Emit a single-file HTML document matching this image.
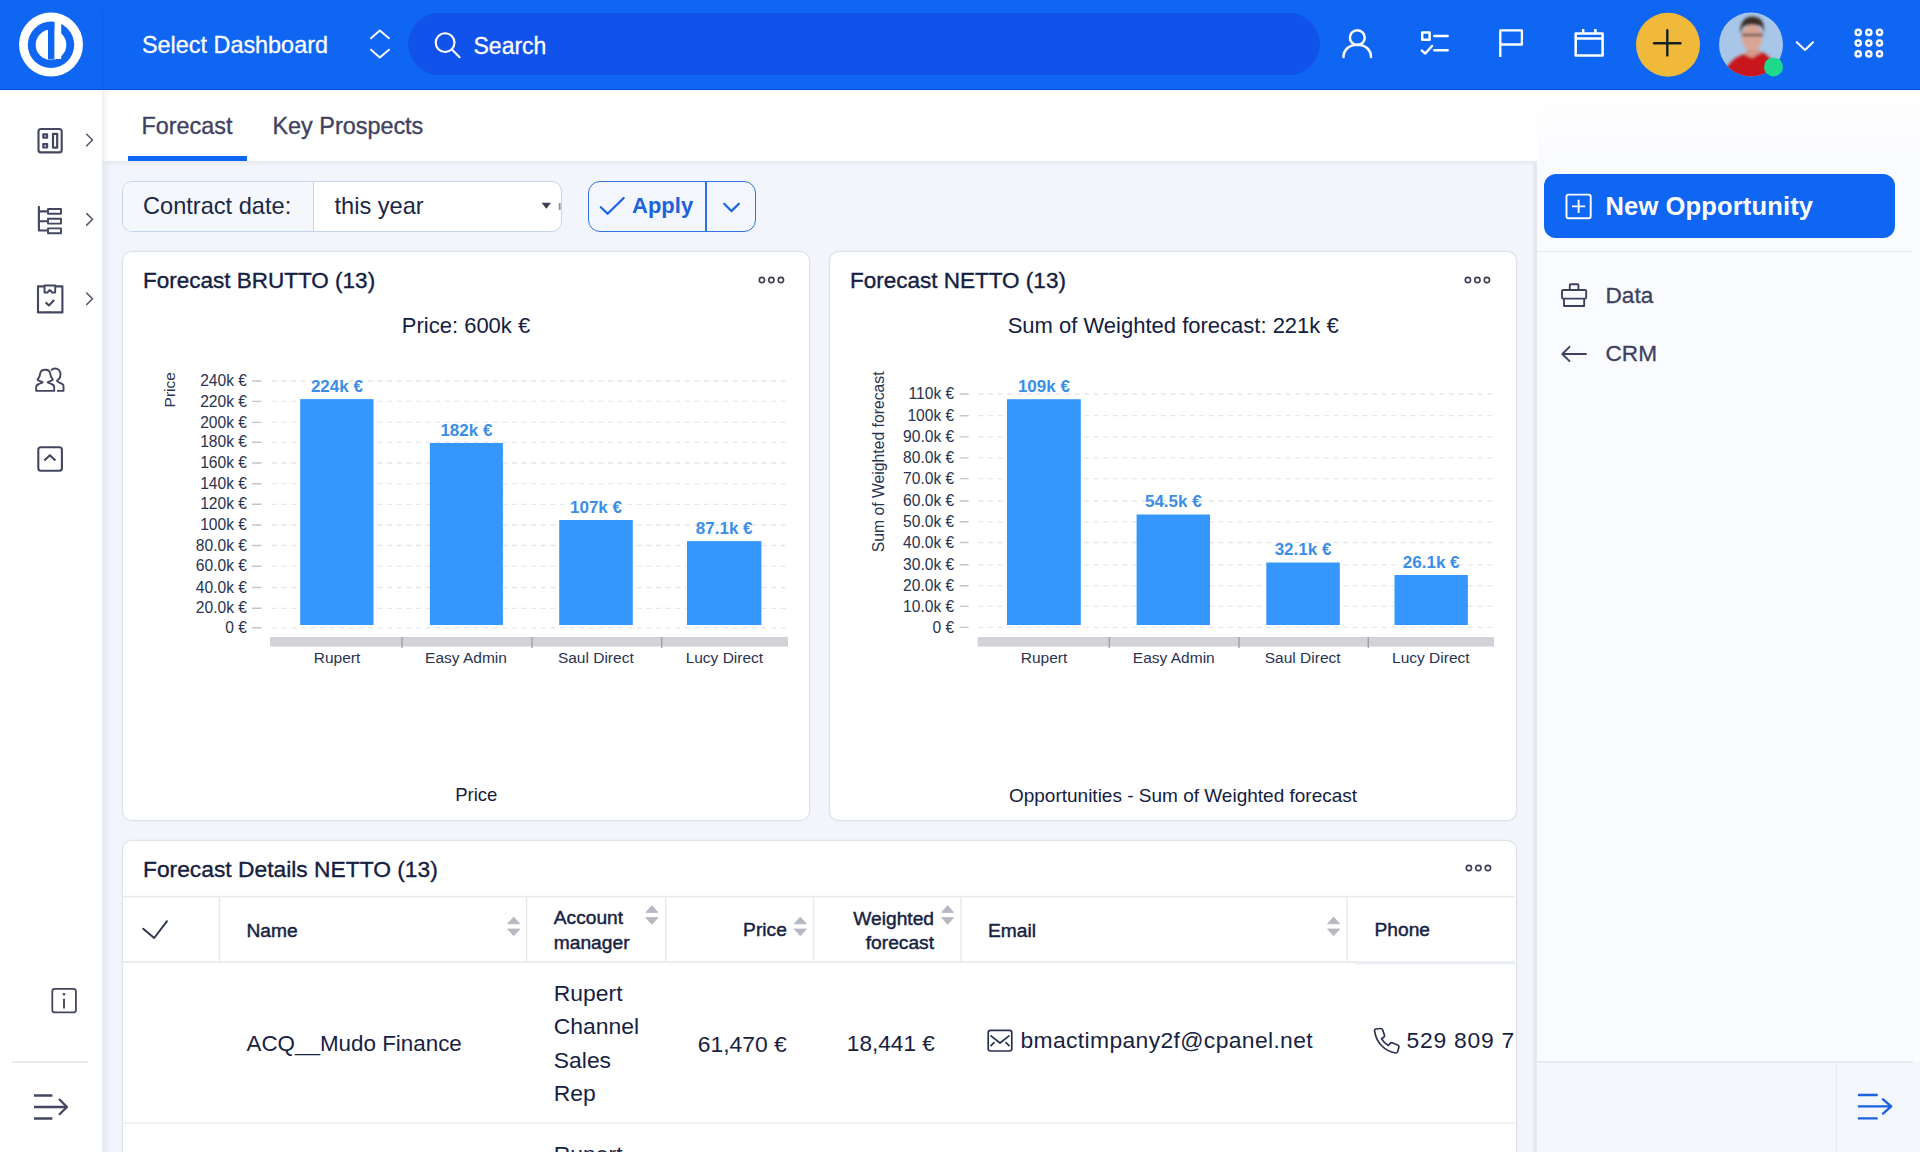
<!DOCTYPE html>
<html><head><meta charset="utf-8">
<style>
*{box-sizing:border-box;margin:0;padding:0}
html,body{width:1920px;height:1152px;overflow:hidden;font-family:"Liberation Sans",sans-serif;color:#1b2440;background:#f2f5fc}
.abs{position:absolute}
.t{position:absolute;white-space:nowrap;line-height:1}
#hdr{position:absolute;left:0;top:0;width:1920px;height:90px;background:#0e66f2;border-bottom:1.5px solid #0852d6}
#search{position:absolute;left:408px;top:13px;width:912px;height:62px;border-radius:31px;background:#1152ea}
#lsb{position:absolute;left:0;top:90px;width:102px;height:1062px;background:#fff}
#lsbsh{position:absolute;left:102px;top:90px;width:8px;height:1062px;background:linear-gradient(90deg,rgba(30,40,70,.07),rgba(30,40,70,0))}
#tabs{position:absolute;left:102px;top:90px;width:1435px;height:72px;background:#fff}
#tabsh{position:absolute;left:102px;top:161px;width:1435px;height:5px;background:linear-gradient(180deg,#e4e7ec,rgba(242,245,252,0))}
#rsb{position:absolute;left:1537px;top:90px;width:383px;height:1062px;background:linear-gradient(180deg,#fff 0px,#fafbfe 70px)}
#rsbsh{position:absolute;left:1532px;top:162px;width:5px;height:990px;background:linear-gradient(90deg,rgba(226,230,238,0),#e2e6ee 60%,#e6e9f0)}
.card{position:absolute;background:#fff;border:1.7px solid #dfe3e8;border-radius:10px;box-shadow:0 0 1.5px rgba(40,50,70,.10)}
.ic{position:absolute;overflow:visible}
</style></head><body>
<div id="hdr"></div>
<div class="abs" style="left:101.5px;top:10px;width:1.2px;height:79px;background:#0a5de6"></div>
<!-- logo -->
<svg class="ic" style="left:0;top:0" width="102" height="90" viewBox="0 0 102 90">
<circle cx="51" cy="44.6" r="32" fill="#fff"/>
<circle cx="51" cy="44.8" r="23.2" fill="#0e66f2"/>
<circle cx="51" cy="44.8" r="15.3" fill="#fff"/>
<rect x="48" y="22" width="6.6" height="37.5" fill="#0e66f2"/>
<rect x="54.6" y="14" width="6.6" height="45" fill="#fff"/>
</svg>
<div class="t" style="left:142px;top:34px;font-size:23.4px;color:#fff;-webkit-text-stroke:0.3px currentColor">Select Dashboard</div>
<svg class="ic" style="left:0;top:0" width="400" height="90"><path d="M371 38.2 L379.8 30.5 L389 38.2 M371 49.7 L379.8 57.4 L389 49.7" stroke="#fff" stroke-width="2" fill="none" stroke-linecap="round" stroke-linejoin="round"/></svg>
<div id="search"></div>
<svg class="ic" style="left:0;top:0" width="470" height="90"><circle cx="445.1" cy="42.6" r="9.4" stroke="#fff" stroke-width="2.1" fill="none"/><path d="M452.4 50 L459.6 57.2" stroke="#fff" stroke-width="2.1" stroke-linecap="round"/></svg>
<div class="t" style="left:473.5px;top:34.5px;font-size:23px;color:#fff;-webkit-text-stroke:0.3px currentColor">Search</div>

<!-- header right icons -->
<svg class="ic" style="left:0;top:0" width="1920" height="90" fill="none" stroke="#fff" stroke-width="2.5" stroke-linecap="round" stroke-linejoin="round">
<circle cx="1357.3" cy="37.7" r="7.4"/>
<path d="M1343.5 57 C1343.5 50 1349 44.8 1357.3 44.8 C1365.6 44.8 1371 50 1371 57"/>
<rect x="1422.2" y="32.5" width="7.4" height="7.2" stroke-linecap="butt"/>
<path d="M1434.3 35.9 H1447.6 M1434.3 50.2 H1447.6"/>
<path d="M1421.8 50.6 L1425.3 53.5 L1432 46" />
<path d="M1500.3 57 V30.4 H1521.9 V44.5 H1500.3" stroke-linecap="butt" stroke-width="2.3"/>
<rect x="1575.7" y="33.4" width="26.9" height="22" stroke-linecap="butt"/>
<path d="M1575.7 38.5 H1602.6 M1583.2 29 V33.4 M1595.4 29 V33.4" stroke-linecap="butt"/>
<path d="M1796.8 42.2 L1805 50 L1813 42.2" stroke-width="2.1"/>
</svg>
<svg class="ic" style="left:0;top:0" width="1920" height="90">
<circle cx="1668" cy="44.7" r="32" fill="#f1b93a"/>
<path d="M1654 43.2 H1680.5 M1667.3 30.3 V55.4" stroke="#14201f" stroke-width="2.4" stroke-linecap="round"/>
<defs><clipPath id="avc"><circle cx="1751" cy="44.5" r="32"/></clipPath>
<filter id="blr"><feGaussianBlur stdDeviation="1.6"/></filter></defs>
<g clip-path="url(#avc)">
<rect x="1715" y="10" width="72" height="70" fill="#a8c6e8"/>
<g filter="url(#blr)">
<path d="M1722 82 C1723 68 1732 58 1744 54 L1752 57 L1762 52 C1770 56 1776 64 1780 82 Z" fill="#c7141c"/>
<path d="M1744 54 L1748 49 H1757 L1762 52 L1752 58 Z" fill="#d49a88"/>
<ellipse cx="1752" cy="37.5" rx="10.5" ry="13" fill="#d9a696"/>
<path d="M1740.5 34 C1739 21 1746 16.5 1752 16.5 C1760 16.5 1765 21 1764 33 L1762 27 C1757 24 1747 24 1743 27 Z" fill="#3a2d28"/>
<path d="M1742 35 H1763" stroke="#4d3b36" stroke-width="2.2"/>
</g>
</g>
<circle cx="1773.5" cy="66.9" r="9.5" fill="#1fd98b"/>
<g fill="none" stroke="#fff" stroke-width="2.4">
<circle cx="1858.2" cy="32.4" r="2.6"/><circle cx="1868.8" cy="32.4" r="2.6"/><circle cx="1879.5" cy="32.4" r="2.6"/>
<circle cx="1858.2" cy="43.1" r="2.6"/><circle cx="1868.8" cy="43.1" r="2.6"/><circle cx="1879.5" cy="43.1" r="2.6"/>
<circle cx="1858.2" cy="53.9" r="2.6"/><circle cx="1868.8" cy="53.9" r="2.6"/><circle cx="1879.5" cy="53.9" r="2.6"/>
</g>
</svg>

<div id="lsb"></div>
<div id="tabs"></div>
<div id="lsbsh"></div>
<div id="rsb"></div>
<div id="tabsh"></div>
<div id="rsbsh"></div>

<!-- left sidebar icons -->
<svg class="ic" style="left:0;top:0" width="102" height="1152" fill="none" stroke="#43465f" stroke-width="2.1" stroke-linejoin="round">
<rect x="38.5" y="129" width="23.2" height="23.4" rx="2.5"/>
<rect x="43.3" y="134.3" width="3.8" height="3.4" stroke-width="2.2"/>
<rect x="43.3" y="144.1" width="3.8" height="3.4" stroke-width="2.2"/>
<rect x="53" y="133.8" width="4.2" height="13.8" stroke-width="2.2"/>
<path d="M38.9 206 V230.5 H47.4 M38.9 211.4 H47.4 M38.9 221.2 H47.4"/>
<rect x="48" y="209" width="13" height="4.8" stroke-width="1.9"/>
<rect x="48" y="218.8" width="13" height="4.8" stroke-width="1.9"/>
<rect x="48" y="228.4" width="13" height="4.8" stroke-width="1.9"/>
<path d="M44.2 286.4 H38 V312.4 H62.4 V286.4 H55.4"/>
<path d="M44.5 285.5 V292.5 H47.5 L49.8 290 L52.3 292.5 H55.2 V285.5 Z" stroke-width="1.9"/>
<path d="M45.6 302.2 L48.9 305.4 L54.2 300"/>
<path stroke-width="1.9" d="M36.2 390.9 V387 C36.2 385.5 37.5 384.5 39 384 L42.7 382.3 C41.5 381.5 38.3 381 37.6 379.7 C39.5 377.5 40 375.5 40.2 373.4 C40.6 371 42.5 369.8 45.2 369.8 C47.9 369.8 49.8 371 50.2 373.4 C50.4 375.5 50.9 377.5 52.8 379.7 C52.1 381 48.9 381.5 47.7 382.3 L51.4 384 C52.9 384.5 54.2 385.5 54.2 387 V390.9 Z"/>
<path stroke-width="1.9" d="M51.6 369.8 C52.5 368.8 53.8 368.5 55 368.5 C58.3 368.5 60.5 371 60.5 374.5 C60.5 377.2 59.2 379.2 56.9 380.7 C57.5 382 60 383 62 383.8 C63 384.3 63.5 385 63.5 386 V390.9 H57.8" stroke-linecap="round"/>
<rect x="38.3" y="447.3" width="23.6" height="23.4" rx="2.5"/>
<path d="M44.3 460.6 L49.9 455.2 L55.4 460.6"/>
<rect x="52.3" y="988.8" width="23.6" height="23.6" rx="2.5" stroke-width="1.8"/>
<path d="M64 998.8 V1008.5" stroke-width="1.9"/><circle cx="64" cy="994.3" r="1.3" fill="#3f425e" stroke="none"/>
<path d="M34 1095.5 H52.4 M34 1118.5 H52.4 M34 1107 H66.5 M59 1099 L67 1107 L59 1114.8" stroke-width="2.3"/>
</svg>
<svg class="ic" style="left:0;top:0" width="102" height="400" fill="none" stroke="#55586e" stroke-width="1.6" stroke-linecap="round" stroke-linejoin="round">
<path d="M86.7 134.3 L92.5 140 L86.7 145.8"/>
<path d="M86.7 213.6 L92.5 219.3 L86.7 225.1"/>
<path d="M86.7 293 L92.5 298.7 L86.7 304.5"/>
</svg>
<div class="abs" style="left:12px;top:1061px;width:76px;height:1.5px;background:#e9eaef"></div>

<!-- tabs -->
<div class="t" style="left:141.5px;top:115.2px;font-size:23.4px;color:#3f4361;-webkit-text-stroke:0.35px currentColor">Forecast</div>
<div class="t" style="left:272.5px;top:115.2px;font-size:23.4px;color:#3f4361;-webkit-text-stroke:0.35px currentColor">Key Prospects</div>
<div class="abs" style="left:128px;top:156px;width:119px;height:5px;background:#0e66f2"></div>

<!-- filter bar -->
<div class="abs" style="left:122px;top:180.5px;width:439.5px;height:51px;border:1.5px solid #c8d5e8;border-radius:10px;background:#fff;overflow:hidden">
<div class="abs" style="left:0;top:0;width:191px;height:49px;background:#f4f7fc;border-right:1.5px solid #c8d5e8"></div>
</div>
<div class="t" style="left:143px;top:195px;font-size:23.6px;color:#1b2746">Contract date:</div>
<div class="t" style="left:334.5px;top:195px;font-size:23.6px;color:#1b2746">this year</div>
<svg class="ic" style="left:0;top:0" width="600" height="240"><path d="M541.6 202.8 H551 L546.3 208.8 Z" fill="#3b3f55"/><rect x="558.8" y="203" width="1.8" height="7" fill="#8a8e9a"/></svg>
<div class="abs" style="left:587.5px;top:180.5px;width:168.5px;height:51px;border:1.8px solid #2f72e2;border-radius:12px;background:#f3f7fd"></div>
<div class="abs" style="left:705px;top:181px;width:1.8px;height:50px;background:#2f72e2"></div>
<svg class="ic" style="left:0;top:0" width="800" height="240" fill="none" stroke="#1a63dc" stroke-width="2.2" stroke-linecap="round" stroke-linejoin="round"><path d="M600.8 207.2 L607.6 213.8 L623.7 198"/><path d="M724.2 203.8 L731.4 211.1 L738.9 203.8"/></svg>
<div class="t" style="left:632px;top:195px;font-size:22px;font-weight:bold;color:#1a63dc">Apply</div>

<!-- CHARTS -->
<div class="card" style="left:122px;top:251px;width:688px;height:570px"></div>
<div class="t" style="left:143.0px;top:269.7px;font-size:22.5px;color:#14203f;-webkit-text-stroke:0.35px currentColor;">Forecast BRUTTO (13)</div>
<svg class="ic" style="left:751.5px;top:270px" width="40" height="20"><g fill="none" stroke="#3c3f56" stroke-width="1.6"><circle cx="9.9" cy="10" r="2.65"/><circle cx="19.4" cy="10" r="2.65"/><circle cx="28.9" cy="10" r="2.65"/></g></svg>
<div class="t" style="left:-34.0px;width:1000px;text-align:center;top:315.4px;font-size:22px;color:#14203f;">Price: 600k €</div>
<svg class="ic" style="left:0;top:0" width="1920" height="900">
<path d="M272 381.0 H786 M272 401.4 H786 M272 422.4 H786 M272 442.3 H786 M272 463.0 H786 M272 483.7 H786 M272 504.3 H786 M272 525.0 H786 M272 545.5 H786 M272 566.3 H786 M272 587.5 H786 M272 608.3 H786 M272 627.8 H786" stroke="#e7e8eb" stroke-width="1.3" stroke-dasharray="5 4.6" fill="none"/>
<path d="M252 381.0 H261.5 M252 401.4 H261.5 M252 422.4 H261.5 M252 442.3 H261.5 M252 463.0 H261.5 M252 483.7 H261.5 M252 504.3 H261.5 M252 525.0 H261.5 M252 545.5 H261.5 M252 566.3 H261.5 M252 587.5 H261.5 M252 608.3 H261.5 M252 627.8 H261.5" stroke="#c3c5cb" stroke-width="1.4" fill="none"/>
<rect x="270" y="637" width="518" height="9.6" fill="#d2d3d8"/>
<rect x="401.3" y="637" width="1.4" height="11" fill="#a0a2a8"/>
<rect x="531.3" y="637" width="1.4" height="11" fill="#a0a2a8"/>
<rect x="661.0" y="637" width="1.4" height="11" fill="#a0a2a8"/>
<rect x="300.2" y="399.1" width="73.30000000000001" height="225.89999999999998" fill="#3597fe"/>
<rect x="429.9" y="443" width="73.0" height="182" fill="#3597fe"/>
<rect x="559.2" y="520" width="73.59999999999991" height="105" fill="#3597fe"/>
<rect x="687" y="541.1" width="74.39999999999998" height="83.89999999999998" fill="#3597fe"/>
</svg>
<div class="t" style="right:1673.0px;top:373.1px;font-size:15.6px;color:#2a3350;">240k €</div>
<div class="t" style="right:1673.0px;top:393.5px;font-size:15.6px;color:#2a3350;">220k €</div>
<div class="t" style="right:1673.0px;top:414.5px;font-size:15.6px;color:#2a3350;">200k €</div>
<div class="t" style="right:1673.0px;top:434.4px;font-size:15.6px;color:#2a3350;">180k €</div>
<div class="t" style="right:1673.0px;top:455.1px;font-size:15.6px;color:#2a3350;">160k €</div>
<div class="t" style="right:1673.0px;top:475.8px;font-size:15.6px;color:#2a3350;">140k €</div>
<div class="t" style="right:1673.0px;top:496.4px;font-size:15.6px;color:#2a3350;">120k €</div>
<div class="t" style="right:1673.0px;top:517.1px;font-size:15.6px;color:#2a3350;">100k €</div>
<div class="t" style="right:1673.0px;top:537.6px;font-size:15.6px;color:#2a3350;">80.0k €</div>
<div class="t" style="right:1673.0px;top:558.4px;font-size:15.6px;color:#2a3350;">60.0k €</div>
<div class="t" style="right:1673.0px;top:579.6px;font-size:15.6px;color:#2a3350;">40.0k €</div>
<div class="t" style="right:1673.0px;top:600.4px;font-size:15.6px;color:#2a3350;">20.0k €</div>
<div class="t" style="right:1673.0px;top:619.9px;font-size:15.6px;color:#2a3350;">0 €</div>
<div class="t" style="left:-163.1px;width:1000px;text-align:center;top:377.9px;font-size:17px;color:#3a8ee8;font-weight:bold;">224k €</div>
<div class="t" style="left:-33.6px;width:1000px;text-align:center;top:421.8px;font-size:17px;color:#3a8ee8;font-weight:bold;">182k €</div>
<div class="t" style="left:96.0px;width:1000px;text-align:center;top:498.8px;font-size:17px;color:#3a8ee8;font-weight:bold;">107k €</div>
<div class="t" style="left:224.2px;width:1000px;text-align:center;top:519.9px;font-size:17px;color:#3a8ee8;font-weight:bold;">87.1k €</div>
<div class="t" style="left:-163.0px;width:1000px;text-align:center;top:649.6px;font-size:15.5px;color:#2a3350;">Rupert</div>
<div class="t" style="left:-34.0px;width:1000px;text-align:center;top:649.6px;font-size:15.5px;color:#2a3350;">Easy Admin</div>
<div class="t" style="left:95.8px;width:1000px;text-align:center;top:649.6px;font-size:15.5px;color:#2a3350;">Saul Direct</div>
<div class="t" style="left:224.4px;width:1000px;text-align:center;top:649.6px;font-size:15.5px;color:#2a3350;">Lucy Direct</div>
<div class="t" style="left:-130px;top:382.2px;width:600px;height:15.5px;text-align:center;font-size:15.5px;color:#2a3350;transform:rotate(-90deg);transform-origin:300px 7.75px">Price</div>
<div class="t" style="left:-23.7px;width:1000px;text-align:center;top:786.0px;font-size:18.5px;color:#14203f;">Price</div>
<div class="card" style="left:829px;top:251px;width:688px;height:570px"></div>
<div class="t" style="left:850.0px;top:269.7px;font-size:22.5px;color:#14203f;-webkit-text-stroke:0.35px currentColor;">Forecast NETTO (13)</div>
<svg class="ic" style="left:1458px;top:270px" width="40" height="20"><g fill="none" stroke="#3c3f56" stroke-width="1.6"><circle cx="9.9" cy="10" r="2.65"/><circle cx="19.4" cy="10" r="2.65"/><circle cx="28.9" cy="10" r="2.65"/></g></svg>
<div class="t" style="left:673.2px;width:1000px;text-align:center;top:315.4px;font-size:22px;color:#14203f;">Sum of Weighted forecast: 221k €</div>
<svg class="ic" style="left:0;top:0" width="1920" height="900">
<path d="M978.4 394.0 H1492 M978.4 415.7 H1492 M978.4 436.9 H1492 M978.4 457.9 H1492 M978.4 478.6 H1492 M978.4 501.0 H1492 M978.4 521.8 H1492 M978.4 542.5 H1492 M978.4 564.8 H1492 M978.4 585.7 H1492 M978.4 606.4 H1492 M978.4 627.4 H1492" stroke="#e7e8eb" stroke-width="1.3" stroke-dasharray="5 4.6" fill="none"/>
<path d="M959.7 394.0 H968.7 M959.7 415.7 H968.7 M959.7 436.9 H968.7 M959.7 457.9 H968.7 M959.7 478.6 H968.7 M959.7 501.0 H968.7 M959.7 521.8 H968.7 M959.7 542.5 H968.7 M959.7 564.8 H968.7 M959.7 585.7 H968.7 M959.7 606.4 H968.7 M959.7 627.4 H968.7" stroke="#c3c5cb" stroke-width="1.4" fill="none"/>
<rect x="977.7" y="637" width="516.3" height="9.6" fill="#d2d3d8"/>
<rect x="1108.6" y="637" width="1.4" height="11" fill="#a0a2a8"/>
<rect x="1238.3" y="637" width="1.4" height="11" fill="#a0a2a8"/>
<rect x="1367.6" y="637" width="1.4" height="11" fill="#a0a2a8"/>
<rect x="1007" y="399.2" width="73.79999999999995" height="225.8" fill="#3597fe"/>
<rect x="1136.6" y="514.5" width="73.40000000000009" height="110.5" fill="#3597fe"/>
<rect x="1266.3" y="562.5" width="73.5" height="62.5" fill="#3597fe"/>
<rect x="1394.5" y="575" width="73.40000000000009" height="50" fill="#3597fe"/>
</svg>
<div class="t" style="right:965.8px;top:386.1px;font-size:15.6px;color:#2a3350;">110k €</div>
<div class="t" style="right:965.8px;top:407.8px;font-size:15.6px;color:#2a3350;">100k €</div>
<div class="t" style="right:965.8px;top:429.0px;font-size:15.6px;color:#2a3350;">90.0k €</div>
<div class="t" style="right:965.8px;top:450.0px;font-size:15.6px;color:#2a3350;">80.0k €</div>
<div class="t" style="right:965.8px;top:470.7px;font-size:15.6px;color:#2a3350;">70.0k €</div>
<div class="t" style="right:965.8px;top:493.1px;font-size:15.6px;color:#2a3350;">60.0k €</div>
<div class="t" style="right:965.8px;top:513.9px;font-size:15.6px;color:#2a3350;">50.0k €</div>
<div class="t" style="right:965.8px;top:534.6px;font-size:15.6px;color:#2a3350;">40.0k €</div>
<div class="t" style="right:965.8px;top:556.9px;font-size:15.6px;color:#2a3350;">30.0k €</div>
<div class="t" style="right:965.8px;top:577.8px;font-size:15.6px;color:#2a3350;">20.0k €</div>
<div class="t" style="right:965.8px;top:598.5px;font-size:15.6px;color:#2a3350;">10.0k €</div>
<div class="t" style="right:965.8px;top:619.5px;font-size:15.6px;color:#2a3350;">0 €</div>
<div class="t" style="left:543.9px;width:1000px;text-align:center;top:378.0px;font-size:17px;color:#3a8ee8;font-weight:bold;">109k €</div>
<div class="t" style="left:673.3px;width:1000px;text-align:center;top:493.3px;font-size:17px;color:#3a8ee8;font-weight:bold;">54.5k €</div>
<div class="t" style="left:803.0px;width:1000px;text-align:center;top:541.3px;font-size:17px;color:#3a8ee8;font-weight:bold;">32.1k €</div>
<div class="t" style="left:931.2px;width:1000px;text-align:center;top:553.8px;font-size:17px;color:#3a8ee8;font-weight:bold;">26.1k €</div>
<div class="t" style="left:544.0px;width:1000px;text-align:center;top:649.6px;font-size:15.5px;color:#2a3350;">Rupert</div>
<div class="t" style="left:673.8px;width:1000px;text-align:center;top:649.6px;font-size:15.5px;color:#2a3350;">Easy Admin</div>
<div class="t" style="left:802.7px;width:1000px;text-align:center;top:649.6px;font-size:15.5px;color:#2a3350;">Saul Direct</div>
<div class="t" style="left:930.8px;width:1000px;text-align:center;top:649.6px;font-size:15.5px;color:#2a3350;">Lucy Direct</div>
<div class="t" style="left:578.8px;top:454.4px;width:600px;height:15.75px;text-align:center;font-size:15.75px;color:#2a3350;transform:rotate(-90deg);transform-origin:300px 7.875px">Sum of Weighted forecast</div>
<div class="t" style="left:683.0px;width:1000px;text-align:center;top:785.6px;font-size:19px;color:#14203f;">Opportunities - Sum of Weighted forecast</div>
<!-- /CHARTS -->
<!-- TABLE -->
<div class="card" style="left:122px;top:840px;width:1394.5px;height:400px;overflow:hidden">
</div>
<div class="t" style="left:143.0px;top:858.0px;font-size:22.8px;color:#14203f;-webkit-text-stroke:0.35px currentColor;">Forecast Details NETTO (13)</div>
<svg class="ic" style="left:1459px;top:858px" width="40" height="20"><g fill="none" stroke="#3c3f56" stroke-width="1.6"><circle cx="9.9" cy="10" r="2.65"/><circle cx="19.4" cy="10" r="2.65"/><circle cx="28.9" cy="10" r="2.65"/></g></svg>
<svg class="ic" style="left:0;top:0" width="1920" height="1152">
<g fill="#e7e9ee">
<rect x="123" y="895.8" width="1392" height="1.5"/>
<rect x="123" y="961.2" width="1392" height="1.6"/>
<rect x="1355" y="962.8" width="160" height="1.6" fill="#eceef2"/>
<rect x="123" y="1122.4" width="1392" height="1.5" fill="#eceef2"/>
<rect x="218.8" y="897" width="1.4" height="64.5"/>
<rect x="526.0" y="897" width="1.4" height="64.5"/>
<rect x="665.0999999999999" y="897" width="1.4" height="64.5"/>
<rect x="812.8" y="897" width="1.4" height="64.5"/>
<rect x="960.3" y="897" width="1.4" height="64.5"/>
<rect x="1346.3" y="897" width="1.4" height="64.5"/>
</g>
<path d="M143.2 928.7 L154.2 938 L167 921.2" fill="none" stroke="#2a3350" stroke-width="1.9" stroke-linecap="round" stroke-linejoin="round"/>
<path d="M507.6 923.8 L513.7 917 L519.8000000000001 923.8 Z M507.6 929 L513.7 935.8 L519.8000000000001 929 Z" fill="#b6b9c2" stroke="#b6b9c2" stroke-width="0.8" stroke-linejoin="round"/>
<path d="M645.8 912.4 L651.9 905.6 L658.0 912.4 Z M645.8 917.6 L651.9 924.4 L658.0 917.6 Z" fill="#b6b9c2" stroke="#b6b9c2" stroke-width="0.8" stroke-linejoin="round"/>
<path d="M794.2 923.8 L800.3000000000001 917 L806.4000000000001 923.8 Z M794.2 929 L800.3000000000001 935.8 L806.4000000000001 929 Z" fill="#b6b9c2" stroke="#b6b9c2" stroke-width="0.8" stroke-linejoin="round"/>
<path d="M941.5 912.4 L947.6 905.6 L953.7 912.4 Z M941.5 917.6 L947.6 924.4 L953.7 917.6 Z" fill="#b6b9c2" stroke="#b6b9c2" stroke-width="0.8" stroke-linejoin="round"/>
<path d="M1327.5 923.8 L1333.6 917 L1339.7 923.8 Z M1327.5 929 L1333.6 935.8 L1339.7 929 Z" fill="#b6b9c2" stroke="#b6b9c2" stroke-width="0.8" stroke-linejoin="round"/>
<g fill="none" stroke="#2a3350" stroke-width="1.7" stroke-linecap="round" stroke-linejoin="round">
<rect x="988.2" y="1030.4" width="23.6" height="20.6" rx="2.4"/>
<path d="M991 1035.8 L1000 1043 L1009 1035.8 M991 1045.6 L994 1042.6 M1006 1042.6 L1009 1045.6"/>
<path d="M1374.6 1031.1 C1374.2 1030 1375 1029.2 1376 1029 L1380.4 1028.5 C1381.5 1028.4 1382.3 1028.9 1382.6 1029.8 L1384.5 1035.2 C1384.7 1036 1384.3 1036.8 1383.7 1037.3 L1381.5 1038.7 C1383.3 1042 1385.2 1043.9 1388.4 1045.6 L1390 1043.5 C1390.5 1042.8 1391.4 1042.5 1392.2 1042.8 L1398 1045.2 C1398.8 1045.6 1399.2 1046.4 1398.9 1047.3 L1397.6 1051.8 C1397.3 1052.6 1396.5 1053.1 1395.6 1053 C1384.5 1051 1376.5 1043 1374.6 1031.1 Z"/>
</g>
</svg>
<div class="t" style="left:246.5px;top:920.6px;font-size:19.2px;color:#172242;font-weight:normal;-webkit-text-stroke:0.45px currentColor;">Name</div>
<div class="t" style="left:553.8px;top:908.3px;font-size:19.2px;color:#172242;font-weight:normal;-webkit-text-stroke:0.45px currentColor;">Account</div>
<div class="t" style="left:553.8px;top:932.6px;font-size:19.2px;color:#172242;font-weight:normal;-webkit-text-stroke:0.45px currentColor;">manager</div>
<div class="t" style="right:1133.2px;top:920.4px;font-size:19.2px;color:#172242;font-weight:normal;-webkit-text-stroke:0.45px currentColor;">Price</div>
<div class="t" style="right:986.0px;top:908.6px;font-size:19.2px;color:#172242;font-weight:normal;-webkit-text-stroke:0.45px currentColor;">Weighted</div>
<div class="t" style="right:986.0px;top:933.1px;font-size:19.2px;color:#172242;font-weight:normal;-webkit-text-stroke:0.45px currentColor;">forecast</div>
<div class="t" style="left:988.0px;top:920.6px;font-size:19.2px;color:#172242;font-weight:normal;-webkit-text-stroke:0.45px currentColor;">Email</div>
<div class="t" style="left:1374.5px;top:920.4px;font-size:19.2px;color:#172242;font-weight:normal;-webkit-text-stroke:0.45px currentColor;">Phone</div>
<div class="t" style="left:246.5px;top:1032.7px;font-size:22.4px;color:#172242;">ACQ__Mudo Finance</div>
<div class="t" style="left:553.8px;top:981.7px;font-size:22.9px;color:#172242;">Rupert</div>
<div class="t" style="left:553.8px;top:1015.2px;font-size:22.9px;color:#172242;">Channel</div>
<div class="t" style="left:553.8px;top:1048.7px;font-size:22.9px;color:#172242;">Sales</div>
<div class="t" style="left:553.8px;top:1082.2px;font-size:22.9px;color:#172242;">Rep</div>
<div class="t" style="right:1133.2px;top:1032.5px;font-size:22.9px;color:#172242;">61,470 €</div>
<div class="t" style="right:985.2px;top:1032.9px;font-size:22.6px;color:#172242;">18,441 €</div>
<div class="t" style="left:1020.5px;top:1029.0px;font-size:22.9px;color:#172242;letter-spacing:0.35px;">bmactimpany2f@cpanel.net</div>
<div class="abs" style="left:1405px;top:1020px;width:110.5px;height:40px;overflow:hidden">
<div class="t" style="left:1.5px;top:9.0px;font-size:22.9px;letter-spacing:0.75px;color:#172242">529 809 7.</div>
</div>
<div class="t" style="left:553.8px;top:1142.5px;font-size:22.9px;color:#172242;">Rupert</div>
<!-- /TABLE -->
<!-- RSB -->
<div class="abs" style="left:1537px;top:1062px;width:383px;height:90px;background:#f3f6fb"></div>
<div class="abs" style="left:1537px;top:1061px;width:376px;height:1.5px;background:#e8ebf1"></div>
<div class="abs" style="left:1835.5px;top:1062px;width:1.5px;height:90px;background:#e6e9ef"></div>
<div class="abs" style="left:1537px;top:250.5px;width:376px;height:1.5px;background:#e6e9ef"></div>
<div class="abs" style="left:1544px;top:174px;width:350.5px;height:63.5px;border-radius:12px;background:#0e66f2"></div>
<svg class="ic" style="left:0;top:0" width="1920" height="1152">
<g fill="none" stroke="#fff" stroke-width="1.9"><rect x="1566.5" y="194.6" width="24.2" height="23.6" rx="2"/><path d="M1578.6 199.8 V213 M1572 206.4 H1585.2"/></g>
<g fill="none" stroke="#3d4160" stroke-width="1.9" stroke-linejoin="round">
<rect x="1562" y="290" width="24.2" height="8.6" rx="1.2"/><path d="M1564 298.6 V306 H1584.2 V298.6"/><rect x="1569.8" y="284.3" width="8.6" height="5.7" rx="0.8"/>
<path d="M1586 354 H1562.5 M1569.5 346.8 L1562.3 354 L1569.5 361.2" stroke-linecap="round"/>
</g>
<path d="M1859 1095 H1876.7 M1859 1118.4 H1876.7 M1859 1106.4 H1891 M1883 1099.3 L1891.2 1106.4 L1883 1113.6" fill="none" stroke="#1a63e0" stroke-width="2.4" stroke-linecap="round" stroke-linejoin="round"/>
</svg>
<div class="t" style="left:1605.5px;top:194.2px;font-size:25.5px;color:#fff;font-weight:bold;letter-spacing:0.15px;">New Opportunity</div>
<div class="t" style="left:1605.5px;top:284.9px;font-size:22.6px;color:#3d4160;-webkit-text-stroke:0.3px currentColor;">Data</div>
<div class="t" style="left:1605.5px;top:342.9px;font-size:22.6px;color:#3d4160;-webkit-text-stroke:0.3px currentColor;">CRM</div>
<!-- /RSB -->
</body></html>
